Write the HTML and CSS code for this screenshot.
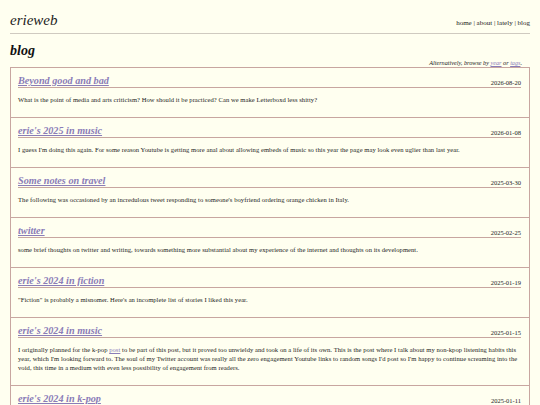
FILE: index.html
```html
<!DOCTYPE html>
<html>
<head>
<meta charset="utf-8">
<link rel="stylesheet" href="styles.css">
</head>
<body>
<header class="site-header">
  <a class="site-name" href="#">erieweb</a>
  <nav class="nav"><a href="#">home</a> | <a href="#">about</a> | <a href="#">lately</a> | <a href="#">blog</a></nav>
</header>
<main class="main">
  <h1 class="page-title">blog</h1>
  <p class="browse">Alternatively, browse by <a href="#">year</a> or <a href="#">tags</a>.</p>
  <ul class="posts">
    <li class="post">
      <div class="post-head"><a class="post-title" href="#">Beyond good and bad</a><span class="post-date">2026-08-20</span></div>
      <p class="post-desc">What is the point of media and arts criticism? How should it be practiced? Can we make Letterboxd less shitty?</p>
    </li>
    <li class="post">
      <div class="post-head"><a class="post-title" href="#">erie's 2025 in music</a><span class="post-date">2026-01-08</span></div>
      <p class="post-desc">I guess I'm doing this again. For some reason Youtube is getting more anal about allowing embeds of music so this year the page may look even uglier than last year.</p>
    </li>
    <li class="post">
      <div class="post-head"><a class="post-title" href="#">Some notes on travel</a><span class="post-date">2025-03-30</span></div>
      <p class="post-desc">The following was occasioned by an incredulous tweet responding to someone's boyfriend ordering orange chicken in Italy.</p>
    </li>
    <li class="post">
      <div class="post-head"><a class="post-title" href="#">twitter</a><span class="post-date">2025-02-25</span></div>
      <p class="post-desc">some brief thoughts on twitter and writing, towards something more substantial about my experience of the internet and thoughts on its development.</p>
    </li>
    <li class="post">
      <div class="post-head"><a class="post-title" href="#">erie's 2024 in fiction</a><span class="post-date">2025-01-19</span></div>
      <p class="post-desc">"Fiction" is probably a misnomer. Here's an incomplete list of stories I liked this year.</p>
    </li>
    <li class="post">
      <div class="post-head"><a class="post-title" href="#">erie's 2024 in music</a><span class="post-date">2025-01-15</span></div>
      <p class="post-desc">I originally planned for the k-pop <a href="#">post</a> to be part of this post, but it proved too unwieldy and took on a life of its own. This is the post where I talk about my non-kpop listening habits this year, which I'm looking forward to. The soul of my Twitter account was really all the zero engagement Youtube links to random songs I'd post so I'm happy to continue screaming into the void, this time in a medium with even less possibility of engagement from readers.</p>
    </li>
    <li class="post">
      <div class="post-head"><a class="post-title" href="#">erie's 2024 in k-pop</a><span class="post-date">2025-01-11</span></div>
      <p class="post-desc">Some thoughts on the year in k-pop.</p>
    </li>
  </ul>
</main>
</body>
</html>
```
FILE: styles.css
```css
html, body {
  margin: 0;
  padding: 0;
  background: #fffff0;
}
body {
  font-family: "Liberation Serif", "Times New Roman", serif;
  color: #111;
  padding: 0 10px;
}
a {
  color: #8a7cb8;
}
.site-header {
  display: flex;
  justify-content: space-between;
  align-items: baseline;
  padding-top: 12px;
  padding-bottom: 4px;
  border-bottom: 1px solid #cfcac0;
}
.site-name {
  font-style: italic;
  font-size: 15px;
  color: #222;
  text-decoration: none;
}
.nav {
  font-size: 7px;
  color: #222;
}
.nav a {
  color: #222;
  text-decoration: none;
}
.page-title {
  margin: 9px 0 0;
  font-size: 14px;
  font-style: italic;
  font-weight: bold;
  line-height: 16px;
}
.browse {
  margin: 0;
  padding-right: 8px;
  text-align: right;
  font-style: italic;
  font-size: 6.2px;
  line-height: 8px;
  color: #222;
}
.posts {
  list-style: none;
  margin: 0;
  padding: 0;
  border: 1px solid #c8a6a0;
  border-bottom: none;
}
.post {
  padding: 0 8px 0 7px;
  border-bottom: 1px solid #c8a6a0;
}
.post-head {
  display: flex;
  justify-content: space-between;
  align-items: flex-end;
  height: 15px;
  padding-top: 4px;
  border-bottom: 1px solid #c8a6a0;
}
.post-title {
  font-size: 10.2px;
  line-height: 13px;
  font-style: italic;
  font-weight: bold;
}
.post-date {
  font-size: 6.5px;
  line-height: 9px;
  color: #222;
}
.post-desc {
  margin: 7px 0 13px;
  font-size: 6.55px;
  letter-spacing: 0.06px;
  line-height: 9px;
  color: #222;
}
```
